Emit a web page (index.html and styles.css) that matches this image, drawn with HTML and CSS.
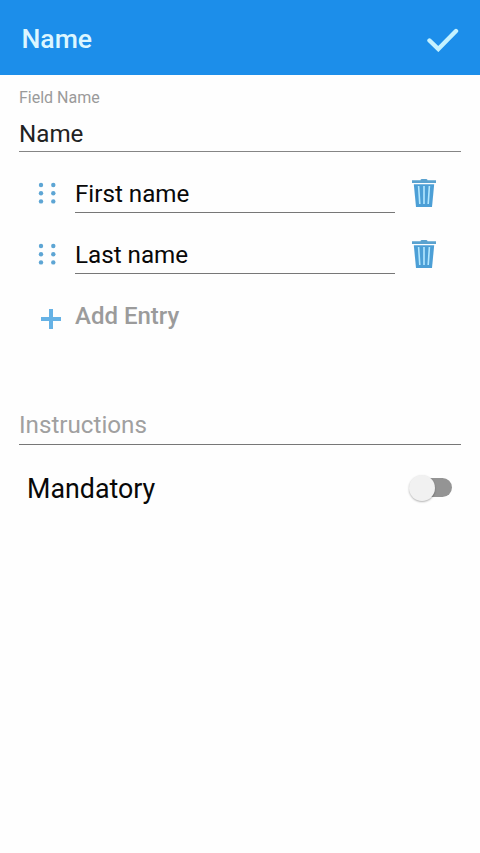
FILE: index.html
```html
<!DOCTYPE html>
<html lang="en">
<head>
<meta charset="utf-8">
<title>Name</title>
<link rel="stylesheet" href="styles.css">
</head>
<body>
<svg class="defs" aria-hidden="true">
  <symbol id="grip" viewBox="0 0 20 24">
    <circle cx="4" cy="4" r="2.2"/><circle cx="16.3" cy="4" r="2.2"/>
    <circle cx="4" cy="12.2" r="2.2"/><circle cx="16.3" cy="12.2" r="2.2"/>
    <circle cx="4" cy="20.4" r="2.2"/><circle cx="16.3" cy="20.4" r="2.2"/>
  </symbol>
  <symbol id="trash" viewBox="0 0 24 29">
    <path class="body" d="M1.8 5.2H22.2L20 28H4Z"/>
    <path class="lid" d="M0 1.3H8.5Q8.5 0 10 0H14Q15.5 0 15.5 1.3H24V4H0Z"/>
    <path class="slots" d="M6.6 7L7.8 25M12 7V25M17.4 7L16.2 25"/>
  </symbol>
</svg>
<header class="bar">
  <h1 class="title">Name</h1>
  <svg class="check" viewBox="0 0 32 24"><path d="M2.5 12.5L11.3 21L29 3"/></svg>
</header>
<main class="form">
  <div class="label">Field Name</div>
  <div class="field field-name">Name</div>
  <div class="entries">
    <div class="entry">
      <svg class="grip"><use href="#grip"/></svg>
      <div class="field entry-field">First name</div>
      <svg class="trash"><use href="#trash"/></svg>
    </div>
    <div class="entry">
      <svg class="grip"><use href="#grip"/></svg>
      <div class="field entry-field">Last name</div>
      <svg class="trash"><use href="#trash"/></svg>
    </div>
    <div class="add">
      <svg class="plus" viewBox="0 0 20 20"><path d="M10 0V20M0 10H20"/></svg>
      <span>Add Entry</span>
    </div>
  </div>
  <div class="field instructions">Instructions</div>
  <div class="option">
    <span>Mandatory</span>
    <div class="switch"><div class="thumb"></div></div>
  </div>
</main>
</body>
</html>
```
FILE: styles.css
```css
* { box-sizing: border-box; }
body {
  margin: 0;
  min-height: 853px;
  background: #fefefe;
  color: #111;
  font-family: Roboto, sans-serif;
}
.defs { display: none; }
.bar {
  display: flex;
  align-items: center;
  justify-content: space-between;
  height: 74.5px;
  padding: 3px 21px 0 21.5px;
  background: #1c8eea;
}
.title {
  margin: 0;
  font-size: 26.6px;
  line-height: 32px;
  font-weight: 500;
  color: #dcf6ff;
}
.check { width: 32px; height: 24px; margin-top: 2px; }
.check path { fill: none; stroke: #c5f2ff; stroke-width: 4.4; stroke-linecap: round; }
.form { padding: 13.5px 19px 0; }
.label { font-size: 16px; line-height: 20px; color: #9a9a9a; }
.field {
  height: 33px;
  font-size: 24.2px;
  line-height: 30px;
  border-bottom: 1px solid #777;
}
.field-name { margin-top: 11px; border-color: #858585; color: #222; }
.entries { padding-left: 18px; }
.entry { display: flex; height: 33px; margin-top: 28px; }
.grip { width: 20px; height: 24px; margin: 1px 18px 0 0; fill: #5da5d4; }
.entry-field { width: 320px; margin-right: 17px; line-height: 28px; color: #080808; }
.trash { width: 24px; height: 29px; margin-top: -1px; }
.body { fill: #4c9fd6; }
.lid { fill: #5aa2cf; }
.slots { fill: none; stroke: #b4e8ff; stroke-width: 1.6; }
.add {
  display: flex;
  height: 30px;
  margin-top: 27px;
  padding-left: 3.5px;
  font-size: 24px;
  line-height: 30px;
  font-weight: 500;
  color: #9b9b9b;
}
.plus { width: 20px; height: 20px; margin: 8px 14.5px 0 0; }
.plus path { fill: none; stroke: #66b2e5; stroke-width: 4; }
.instructions { height: 35px; margin-top: 79px; color: #a0a0a0; }
.option {
  display: flex;
  align-items: center;
  justify-content: space-between;
  height: 34px;
  margin-top: 27px;
  padding: 0 9px 0 8px;
  font-size: 26.8px;
  line-height: 34px;
  color: #080808;
}
.switch {
  display: flex;
  align-items: center;
  width: 42px;
  height: 19px;
  margin-top: -3px;
  border-radius: 10px;
  background: linear-gradient(90deg, transparent 14px, #949494 14px);
}
.thumb {
  width: 26px;
  height: 26px;
  flex: none;
  margin-left: -1px;
  border-radius: 50%;
  background: #f1f1f1;
  box-shadow: 0 1px 2px rgba(0, 0, 0, .3);
}
```
